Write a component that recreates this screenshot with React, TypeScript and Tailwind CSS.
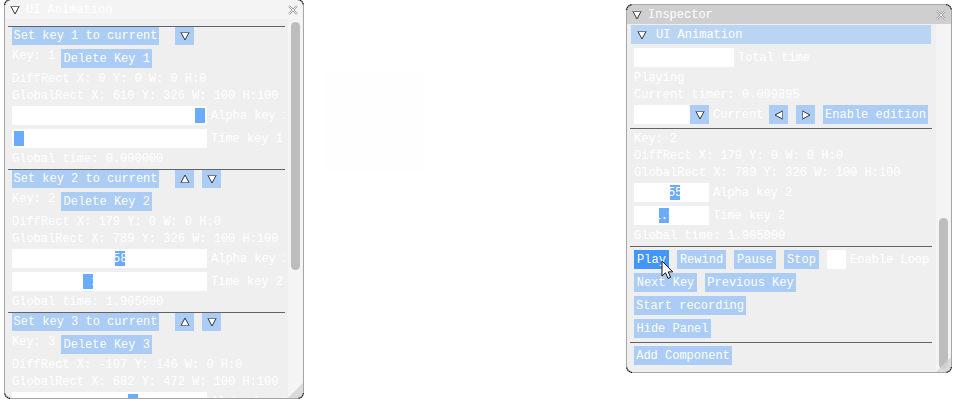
import type { ReactNode } from 'react';

type Direction = 'up' | 'down' | 'left' | 'right';

const trianglePaths: Record<Direction, { base: string; sides: string }> = {
  down: { base: 'M0.5 1.5H9.5', sides: 'M1 1.5L5 9L9 1.5' },
  up: { base: 'M0.5 8.5H9.5', sides: 'M1 8.5L5 1L9 8.5' },
  left: { base: 'M8.5 0.5V9.5', sides: 'M8.5 1L1 5L8.5 9' },
  right: { base: 'M1.5 0.5V9.5', sides: 'M1.5 1L9 5L1.5 9' },
};

function Triangle({ direction }: { direction: Direction }) {
  const { base, sides } = trianglePaths[direction];
  return (
    <svg className="size-[10px] shrink-0" viewBox="0 0 10 10" aria-hidden="true">
      <path d={sides} fill="#fff" stroke="#34373c" strokeWidth="1" />
      <path d={base} stroke="#6f7a88" strokeWidth="1" />
    </svg>
  );
}

function Button({ children, width, active = false }: { children: ReactNode; width: string; active?: boolean }) {
  return (
    <button
      type="button"
      className={`h-[19px] shrink-0 pt-[2px] text-center whitespace-nowrap text-white ${width} ${active ? 'bg-[#4296fa]' : 'bg-[#aaccf5]'}`}
    >
      {children}
    </button>
  );
}

function ArrowButton({ direction, label }: { direction: Direction; label: string }) {
  return (
    <button
      type="button"
      aria-label={label}
      className="flex size-[19px] shrink-0 items-center justify-center bg-[#aaccf5]"
    >
      <Triangle direction={direction} />
    </button>
  );
}

function Line({ children }: { children: ReactNode }) {
  return <p className="h-[13px] leading-[15px] whitespace-nowrap">{children}</p>;
}

function FieldLabel({ htmlFor, children }: { htmlFor: string; children: ReactNode }) {
  return (
    <label htmlFor={htmlFor} className="pt-[2px] whitespace-nowrap">
      {children}
    </label>
  );
}

function Slider({ id, label, value, position, wide = false }: {
  id: string;
  label: string;
  value: string;
  position: number;
  wide?: boolean;
}) {
  return (
    <div className="flex h-[19px] items-center gap-1">
      <div className={`relative h-[19px] shrink-0 bg-white px-[2px] ${wide ? 'w-[195px]' : 'w-[75px]'}`}>
        <input
          id={id}
          type="range"
          min={0}
          max={1000}
          defaultValue={position}
          className="block h-[19px] w-full appearance-none bg-transparent [&::-webkit-slider-thumb]:h-[15px] [&::-webkit-slider-thumb]:w-[10px] [&::-webkit-slider-thumb]:appearance-none [&::-webkit-slider-thumb]:bg-[#6aabfb]"
        />
        <span className="pointer-events-none absolute inset-0 text-center leading-[21px] text-white">{value}</span>
      </div>
      <FieldLabel htmlFor={id}>{label}</FieldLabel>
    </div>
  );
}

function TitleBar({ title, focused = false }: { title: string; focused?: boolean }) {
  return (
    <header className={`flex h-[19px] shrink-0 items-center gap-[6px] px-[5px] ${focused ? 'bg-[#cfcfcf]' : 'bg-[#f4f4f4]'}`}>
      <button type="button" aria-label="Collapse window">
        <Triangle direction="down" />
      </button>
      <h2 className="grow pt-[2px]">{title}</h2>
      <button type="button" aria-label="Close window">
        <svg className="size-[10px]" viewBox="0 0 10 10" aria-hidden="true">
          <path d="M1 1L9 9M9 1L1 9" stroke="#9a9a9a" strokeWidth="2" />
          <path d="M1 1L9 9M9 1L1 9" stroke="#f4f4f4" strokeWidth="0.9" />
        </svg>
      </button>
    </header>
  );
}

function Corner({ className }: { className: string }) {
  return (
    <svg className={`pointer-events-none absolute size-2 ${className}`} viewBox="0 0 8 8" aria-hidden="true">
      <path d="M0.7 6A5.5 5.5 0 0 1 6 0.7" fill="none" stroke="#222" strokeWidth="1.3" strokeDasharray="1.5 0.5" />
    </svg>
  );
}

function WindowFrame({ className, children }: { className: string; children: ReactNode }) {
  return (
    <div className={`relative flex shrink-0 flex-col ${className}`}>
      <section className="relative flex min-h-0 grow flex-col overflow-hidden rounded-[7px] border border-[#a6a6a6] bg-[#efefef]">
        {children}
        <svg className="pointer-events-none absolute right-0 bottom-0 size-[15px]" viewBox="0 0 15 15" aria-hidden="true">
          <path d="M0 15L15 0V15Z" fill="#d5d5d5" fillOpacity="0.85" />
        </svg>
      </section>
      <Corner className="top-0 left-0" />
      <Corner className="top-0 right-0 rotate-90" />
      <Corner className="right-0 bottom-0 rotate-180" />
      <Corner className="bottom-0 left-0 -rotate-90" />
    </div>
  );
}

function Separator() {
  return <hr className="-mx-1 border-t border-[#636363]" />;
}

interface KeyFrame {
  index: number;
  diff: string;
  global: string;
  alpha: number;
  alphaText: string;
  time: number;
  timeText: string;
  globalTime: string;
}

const keys: KeyFrame[] = [
  { index: 1, diff: 'X: 0 Y: 0 W: 0 H:0', global: 'X: 610 Y: 326 W: 100 H:100', alpha: 1000, alphaText: '1.000', time: 0, timeText: '0.000', globalTime: '0.000000' },
  { index: 2, diff: 'X: 179 Y: 0 W: 0 H:0', global: 'X: 789 Y: 326 W: 100 H:100', alpha: 558, alphaText: '0.558', time: 381, timeText: '1.905', globalTime: '1.905000' },
  { index: 3, diff: 'X: -107 Y: 146 W: 0 H:0', global: 'X: 682 Y: 472 W: 100 H:100', alpha: 630, alphaText: '0.630', time: 600, timeText: '3.000', globalTime: '3.000000' },
];

function KeySection({ data, last }: { data: KeyFrame; last: boolean }) {
  const n = data.index;
  return (
    <section className="flex shrink-0 flex-col gap-1">
      <div>
        <Separator />
        <div className="flex h-[18px] items-end gap-4 overflow-hidden">
          <Button width="w-[147px]">Set key {n} to current</Button>
          <div className="flex gap-2">
            {n > 1 && <ArrowButton direction="up" label={`Move key ${n} up`} />}
            <ArrowButton direction="down" label={`Move key ${n} down`} />
          </div>
        </div>
      </div>
      <div className="flex h-[19px] items-start gap-[6px]">
        <Line>Key: {n}</Line>
        <Button width="w-[91px]">Delete Key {n}</Button>
      </div>
      <Line>DiffRect {data.diff}</Line>
      <Line>GlobalRect {data.global}</Line>
      <Slider id={`alpha-${n}`} label={`Alpha key ${n}`} value={data.alphaText} position={data.alpha} wide />
      {!last && (
        <>
          <Slider id={`time-${n}`} label={`Time key ${n}`} value={data.timeText} position={data.time} wide />
          <Line>Global time: {data.globalTime}</Line>
        </>
      )}
    </section>
  );
}

function AnimationWindow() {
  return (
    <WindowFrame className="-mt-px h-[400px] w-[300px]">
      <TitleBar title="UI Animation" />
      <div className="flex min-h-0 grow">
        <div className="min-w-0 grow overflow-hidden pr-[3px]">
          <div className="flex flex-col gap-1 overflow-hidden pt-[7px] pr-1 pl-[7px]">
            {keys.map((key, i) => (
              <KeySection key={key.index} data={key} last={i === keys.length - 1} />
            ))}
          </div>
        </div>
        <div className="w-[15px] shrink-0 bg-[#f4f4f4] px-[3px] pt-[3px]">
          <div className="h-[248px] rounded-full bg-[#bdbdbd]" />
        </div>
      </div>
    </WindowFrame>
  );
}

function InspectorWindow() {
  return (
    <WindowFrame className="mt-1 w-[326px]">
      <TitleBar title="Inspector" focused />
      <div className="flex">
        <div className="min-w-0 grow pt-px pb-[7px]">
          <button type="button" className="ml-1 flex h-[19px] w-[300px] items-center gap-[9px] bg-[#b9d5f3] px-[6px]">
            <Triangle direction="down" />
            <span className="pt-[2px]">UI Animation</span>
          </button>
          <div className="flex flex-col gap-1 pt-1 pr-2 pl-[7px]">
            <div className="flex items-center gap-1">
              <input id="total-time" type="text" className="h-[19px] w-[100px] bg-white px-1 text-white" />
              <FieldLabel htmlFor="total-time">Total time</FieldLabel>
            </div>
            <Line>Playing</Line>
            <Line>Current timer: 0.009895</Line>
            <div className="flex items-center gap-2">
              <div className="flex w-[127px] items-center gap-1">
                <div className="relative h-[19px] w-[75px] shrink-0">
                  <select id="current-key" className="block h-[19px] w-full appearance-none bg-white px-1 text-white" />
                  <span className="pointer-events-none absolute top-0 right-0 flex size-[19px] items-center justify-center bg-[#aaccf5]">
                    <Triangle direction="down" />
                  </span>
                </div>
                <FieldLabel htmlFor="current-key">Current</FieldLabel>
              </div>
              <ArrowButton direction="left" label="Previous" />
              <ArrowButton direction="right" label="Next" />
              <Button width="w-[105px]">Enable edition</Button>
            </div>
            <Separator />
            <div className="-mt-px flex flex-col gap-1">
              <Line>Key: 2</Line>
              <Line>DiffRect X: 179 Y: 0 W: 0 H:0</Line>
              <Line>GlobalRect X: 789 Y: 326 W: 100 H:100</Line>
              <Slider id="inspector-alpha" label="Alpha key 2" value="0.558" position={557} />
              <Slider id="inspector-time" label="Time key 2" value="1.905" position={377} />
              <Line>Global time: 1.905000</Line>
            </div>
            <Separator />
            <div className="-mt-px flex items-center gap-2">
              <div className="relative flex">
                <Button width="w-[35px]" active>Play</Button>
                <svg className="pointer-events-none absolute top-[10px] left-[27px] h-[20px] w-[13px]" viewBox="0 0 13 20" aria-hidden="true">
                  <path d="M1 1V16L4.5 12.8L7 18.5L9.6 17.3L7.2 11.9H11.8Z" fill="#fff" stroke="#111" strokeWidth="1" />
                </svg>
              </div>
              <Button width="w-[49px]">Rewind</Button>
              <Button width="w-[42px]">Pause</Button>
              <Button width="w-[35px]">Stop</Button>
              <div className="flex items-center gap-1">
                <input id="enable-loop" type="checkbox" className="size-[19px] shrink-0 appearance-none bg-white" />
                <FieldLabel htmlFor="enable-loop">Enable Loop</FieldLabel>
              </div>
            </div>
            <div className="flex gap-2">
              <Button width="w-[63px]">Next Key</Button>
              <Button width="w-[91px]">Previous Key</Button>
            </div>
            <div className="flex">
              <Button width="w-[112px]">Start recording</Button>
            </div>
            <div className="flex">
              <Button width="w-[77px]">Hide Panel</Button>
            </div>
            <Separator />
            <div className="-mt-px flex">
              <Button width="w-[98px]">Add Component</Button>
            </div>
          </div>
        </div>
        <div className="flex w-[15px] shrink-0 flex-col justify-end bg-[#f4f4f4] px-[3px] pb-[3px]">
          <div className="h-[151px] rounded-full bg-[#bdbdbd]" />
        </div>
      </div>
    </WindowFrame>
  );
}

export default function App() {
  return (
    <main className="relative flex min-h-screen items-start justify-between overflow-hidden bg-white pr-[5px] pl-1 font-['Liberation_Mono',monospace] text-[12px] leading-[13px] text-white">
      <AnimationWindow />
      <div className="absolute top-[71px] left-[325px] size-[100px] bg-[#fefefe]" />
      <InspectorWindow />
    </main>
  );
}
